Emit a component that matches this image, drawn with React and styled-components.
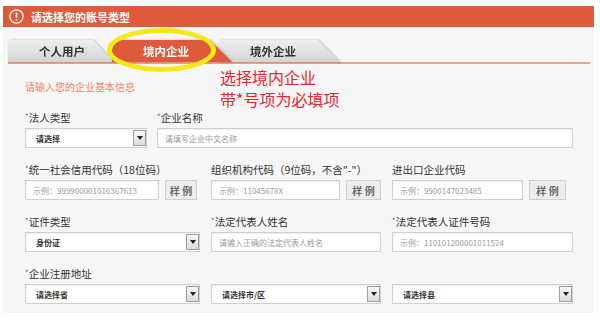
import React from "react";
import styled, { createGlobalStyle } from "styled-components";

const FONT = `"Noto Sans CJK SC", "Liberation Sans", sans-serif`;

const GlobalStyle = createGlobalStyle`
  body {
    margin: 0;
    background: #fff;
    font-family: ${FONT};
  }
`;

function App() {
  return (
    <>
      <GlobalStyle />
      <Panel>
        <Header>
          <svg width="15" height="15" viewBox="0 0 15 15">
            <circle cx="7.5" cy="7.5" r="6.6" fill="none" stroke="#fff" strokeWidth="1.3" />
            <rect x="6.7" y="3.6" width="1.6" height="5" rx="0.6" fill="#fff" />
            <circle cx="7.5" cy="10.8" r="0.9" fill="#fff" />
          </svg>
          请选择您的账号类型
        </Header>

        <TabsArea>
          <Tabs>
            <Tab $w={107} $ml={0} $z={2} $pl={31}>个人用户</Tab>
            <Tab $w={120} $ml={-3} $z={3} $pl={31} $active>境内企业</Tab>
            <Tab $w={122} $ml={-14} $z={1} $pl={32}>境外企业</Tab>
          </Tabs>
        </TabsArea>

        <Form>
          <Intro>
            <IntroText>请输入您的企业基本信息</IntroText>
            <Notice>
              <div>选择境内企业</div>
              <div>带*号项为必填项</div>
            </Notice>
          </Intro>

          <FirstRow>
            <Cell $w={122}>
              <Label><Star>*</Star>法人类型</Label>
              <Select text="请选择" />
            </Cell>
            <Cell $grow>
              <Label><Star>*</Star>企业名称</Label>
              <Input readOnly placeholder="请填写企业中文名称" />
            </Cell>
          </FirstRow>

          <Grid>
            <Cell>
              <Label><Star>*</Star>统一社会信用代码（18位码）</Label>
              <Pair $trail={3}>
                <Input readOnly placeholder="示例：999900001016367613" />
                <SampleBtn $w={32}>样 例</SampleBtn>
              </Pair>
            </Cell>
            <Cell>
              <Label>组织机构代码（9位码，不含"-"）</Label>
              <Pair $trail={0}>
                <Input readOnly placeholder="示例：11045678X" />
                <SampleBtn $w={35}>样 例</SampleBtn>
              </Pair>
            </Cell>
            <Cell>
              <Label>进出口企业代码</Label>
              <Pair $trail={7}>
                <Input readOnly placeholder="示例：9900147023485" />
                <SampleBtn $w={37}>样 例</SampleBtn>
              </Pair>
            </Cell>

            <Cell>
              <Label><Star>*</Star>证件类型</Label>
              <Select text="身份证" />
            </Cell>
            <Cell>
              <Label><Star>*</Star>法定代表人姓名</Label>
              <Input readOnly placeholder="请输入正确的法定代表人姓名" />
            </Cell>
            <Cell>
              <Label><Star>*</Star>法定代表人证件号码</Label>
              <Input readOnly placeholder="示例：110101200001011524" />
            </Cell>

            <Cell>
              <Label><Star>*</Star>企业注册地址</Label>
              <Select text="请选择省" />
            </Cell>
            <Cell>
              <Label>&nbsp;</Label>
              <Select text="请选择市/区" />
            </Cell>
            <Cell>
              <Label>&nbsp;</Label>
              <Select text="请选择县" />
            </Cell>
          </Grid>
        </Form>

        <Highlight />
      </Panel>
    </>
  );
}

function Select({ text }) {
  return (
    <SelectBox>
      <SelectText>{text}</SelectText>
      <DropBtn>
        <svg width="6" height="4" viewBox="0 0 6 4">
          <path d="M0 0 L6 0 L3 4 Z" fill="#222" />
        </svg>
      </DropBtn>
    </SelectBox>
  );
}

const Panel = styled.div`
  position: relative;
  width: 591px;
  height: 307px;
  margin: 6px 0 0 3px;
  background: #f6f6f6;
`;

const Header = styled.div`
  height: 21px;
  background: #de5a3b;
  display: flex;
  align-items: center;
  gap: 7px;
  padding-left: 6px;
  color: #fff;
  font-weight: bold;
  font-size: 11px;
`;

const TabsArea = styled.div`
  padding: 13px 4px 0 5px;
`;

const Tabs = styled.div`
  display: flex;
  align-items: flex-end;
  border-bottom: 2px solid #eba38c;
`;

const Tab = styled.div`
  position: relative;
  z-index: ${(p) => p.$z};
  width: ${(p) => p.$w}px;
  margin-left: ${(p) => p.$ml}px;
  height: 22px;
  box-sizing: border-box;
  padding-left: ${(p) => p.$pl}px;
  line-height: 22px;
  font-size: 11.5px;
  font-weight: bold;
  color: ${(p) => (p.$active ? "#fff" : "#333")};
  filter: drop-shadow(1px 0 1px rgba(0, 0, 0, 0.25));

  &::before {
    content: "";
    position: absolute;
    inset: 0;
    z-index: -1;
    border-radius: ${(p) => (p.$active ? "10px" : "4px")} 0 0 0;
    background: ${(p) =>
      p.$active ? "#dd5b3c" : "linear-gradient(#eeeeee, #d4d4d4)"};
    clip-path: polygon(0 0, calc(100% - 22px) 0, 100% 100%, 0 100%);
  }
`;

const Form = styled.div`
  padding: 0 21px 0 22px;
`;

const Intro = styled.div`
  display: flex;
  height: 46px;
  padding-top: 2px;
  box-sizing: border-box;
`;

const IntroText = styled.div`
  width: 195px;
  padding-top: 14px;
  font-size: 10px;
  line-height: 14px;
  color: #f0836b;
`;

const Notice = styled.div`
  font-size: 16px;
  line-height: 22px;
  color: #e8262e;
`;

const FirstRow = styled.div`
  display: flex;
  gap: 10px;
  margin-bottom: 14px;
`;

const Grid = styled.div`
  display: grid;
  grid-template-columns: 175px 170px 181px;
  column-gap: 11px;
  row-gap: 14px;
`;

const Cell = styled.div`
  display: flex;
  flex-direction: column;
  width: ${(p) => (p.$w ? `${p.$w}px` : "auto")};
  flex: ${(p) => (p.$grow ? 1 : "none")};
  min-width: 0;
`;

const Label = styled.div`
  height: 16px;
  margin-bottom: 2px;
  font-size: 10.5px;
  line-height: 16px;
  color: #333;
  white-space: nowrap;
`;

const Star = styled.span`
  color: #e8262e;
  font-size: 8px;
  vertical-align: top;
  line-height: 14px;
`;

const fieldBase = `
  height: 20px;
  box-sizing: border-box;
  background: #fff;
  border: 1px solid #cfcfcf;
  box-shadow: inset 0 1px 2px rgba(0, 0, 0, 0.07);
`;

const Input = styled.input`
  ${fieldBase}
  width: 100%;
  min-width: 0;
  flex: 1;
  padding: 0 7px;
  font-family: ${FONT};
  font-size: 8px;
  color: #333;
  outline: none;

  &::placeholder {
    color: #9a9a9a;
  }
`;

const SelectBox = styled.div`
  ${fieldBase}
  display: flex;
  align-items: center;
  padding: 1px 0 1px 10px;
`;

const SelectText = styled.span`
  flex: 1;
  font-size: 8px;
  font-weight: bold;
  color: #333;
`;

const DropBtn = styled.div`
  width: 13px;
  height: 16px;
  box-sizing: border-box;
  border: 1px solid #9c9c9c;
  background: linear-gradient(#f7f7f7, #dadada);
  display: flex;
  align-items: center;
  justify-content: center;
`;

const Pair = styled.div`
  display: flex;
  gap: 6px;
  padding-right: ${(p) => p.$trail}px;
`;

const SampleBtn = styled.div`
  width: ${(p) => p.$w}px;
  height: 20px;
  box-sizing: border-box;
  flex: none;
  border: 1px solid #cfcfcf;
  background: #ececec;
  display: flex;
  align-items: center;
  justify-content: center;
  font-size: 10px;
  font-weight: bold;
  color: #6a6a6a;
  white-space: nowrap;
`;

const Highlight = styled.div`
  position: absolute;
  left: 104px;
  top: 22px;
  width: 109px;
  height: 44px;
  box-sizing: border-box;
  border: 5px solid #f4e915;
  border-radius: 50%;
  pointer-events: none;
  z-index: 5;
`;

export default App;
